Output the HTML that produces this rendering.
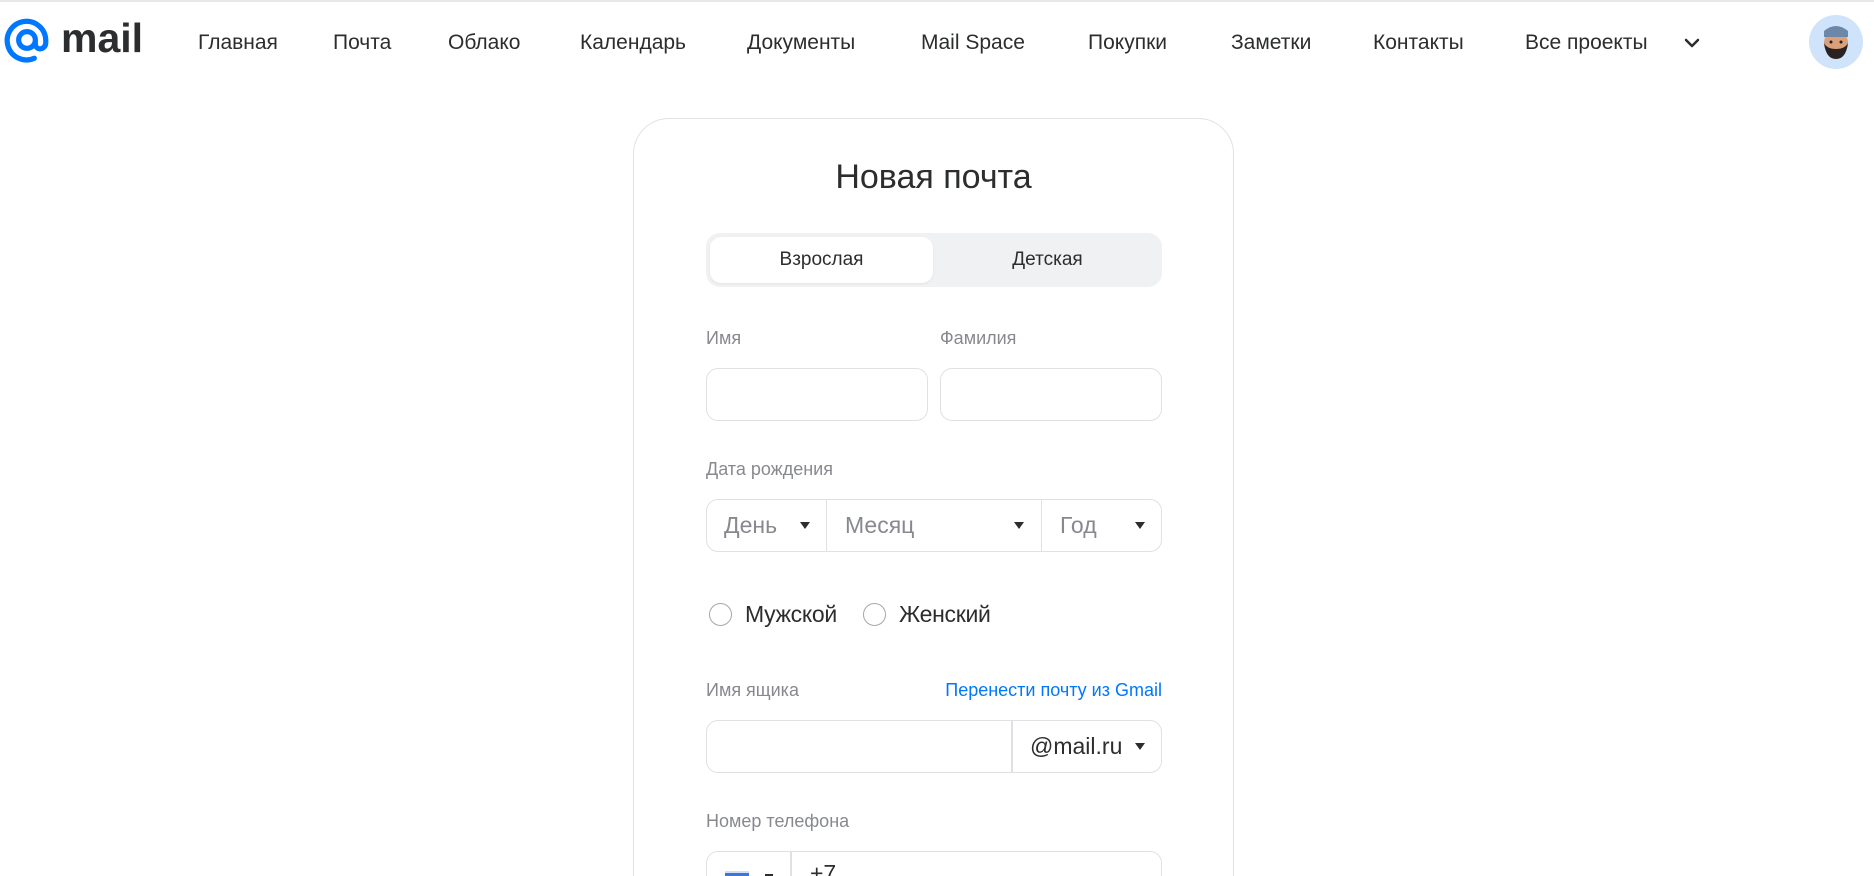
<!DOCTYPE html>
<html style="width:1874px;height:876px;overflow:hidden"><head><meta charset="utf-8"><style>
*{margin:0;padding:0;box-sizing:border-box}
body{width:1874px;height:876px;overflow:hidden;background:#fff;font-family:"Liberation Sans",Arial,sans-serif;color:#2c2d2e;position:relative}
.a{position:absolute;white-space:nowrap}
.nav{font-size:21px;color:#2c2d2e;top:31px}
.lbl{font-size:18px;color:#87898f}
.box{position:absolute;border:1px solid #dfe1e5;border-radius:12px;background:#fff}
.arr{position:absolute;width:0;height:0;border-left:5px solid transparent;border-right:5px solid transparent;border-top:7px solid #2c2d2e}
.ph{font-size:23px;color:#87898f}
.radio{position:absolute;width:23px;height:23px;border:1.5px solid #a5a7ab;border-radius:50%}
</style></head><body>
<div class="a" style="left:0;top:0;width:1874px;height:2px;background:#e7e8ea"></div>
<svg class="a" style="left:3px;top:16px" width="48" height="49" viewBox="0 0 46 47"><path d="M31 23a8 8 0 1 1-8-8 8 8 0 0 1 8 8v3.5c0 3 2 5 4.5 5s5.5-2 5.5-6V23A18.5 18.5 0 1 0 30 40.5" fill="none" stroke="#0077ff" stroke-width="5" stroke-linecap="round"/></svg>
<div class="a" style="left:61px;top:15px;font-size:41px;font-weight:bold;color:#2c2d2e">mail</div>
<div class="a nav" style="left:198px">Главная</div>
<div class="a nav" style="left:333px">Почта</div>
<div class="a nav" style="left:448px">Облако</div>
<div class="a nav" style="left:580px">Календарь</div>
<div class="a nav" style="left:747px">Документы</div>
<div class="a nav" style="left:921px">Mail Space</div>
<div class="a nav" style="left:1088px">Покупки</div>
<div class="a nav" style="left:1231px">Заметки</div>
<div class="a nav" style="left:1373px">Контакты</div>
<div class="a nav" style="left:1525px">Все проекты</div>
<svg class="a" style="left:1684px;top:38px" width="16" height="10" viewBox="0 0 16 10"><path d="M2 2l6 6 6-6" fill="none" stroke="#2c2d2e" stroke-width="2.5" stroke-linecap="round" stroke-linejoin="round"/></svg>
<svg class="a" style="left:1809px;top:15px" width="54" height="54" viewBox="0 0 54 54"><circle cx="27" cy="27" r="27" fill="#cfe3fb"/><ellipse cx="27" cy="28" rx="12" ry="13" fill="#d9a07a"/><path d="M15 16q12-10 24 0v6H15z" fill="#6d87a8"/><path d="M15 28q2 16 12 16t12-16q-3 6-12 6t-12-6z" fill="#2a2220"/><circle cx="22" cy="27" r="1.5" fill="#222"/><circle cx="32" cy="27" r="1.5" fill="#222"/></svg>

<div class="a" style="left:633px;top:118px;width:601px;height:800px;border:1px solid #e0e2e6;border-radius:36px"></div>
<div class="a" style="left:633px;width:601px;top:158px;text-align:center;font-size:34px;color:#2c2d2e">Новая почта</div>
<div class="a" style="left:706px;top:233px;width:456px;height:54px;background:#f0f1f3;border-radius:14px"></div>
<div class="a" style="left:710px;top:237px;width:223px;height:46px;background:#fff;border-radius:11px;box-shadow:0 1px 2px rgba(0,0,0,.06)"></div>
<div class="a" style="left:710px;width:223px;top:249px;text-align:center;font-size:19px">Взрослая</div>
<div class="a" style="left:933px;width:229px;top:249px;text-align:center;font-size:19px">Детская</div>

<div class="a lbl" style="left:706px;top:328px">Имя</div>
<div class="a lbl" style="left:940px;top:328px">Фамилия</div>
<div class="box" style="left:706px;top:368px;width:222px;height:53px"></div>
<div class="box" style="left:940px;top:368px;width:222px;height:53px"></div>

<div class="a lbl" style="left:706px;top:459px">Дата рождения</div>
<div class="box" style="left:706px;top:499px;width:456px;height:53px"></div>
<div class="a" style="left:826px;top:500px;width:1px;height:51px;background:#dfe1e5"></div>
<div class="a" style="left:1041px;top:500px;width:1px;height:51px;background:#dfe1e5"></div>
<div class="a ph" style="left:724px;top:512px">День</div>
<div class="arr" style="left:800px;top:522px"></div>
<div class="a ph" style="left:845px;top:512px">Месяц</div>
<div class="arr" style="left:1014px;top:522px"></div>
<div class="a ph" style="left:1060px;top:512px">Год</div>
<div class="arr" style="left:1135px;top:522px"></div>

<div class="radio" style="left:709px;top:603px"></div>
<div class="a" style="left:745px;top:601px;font-size:23px;letter-spacing:-0.3px">Мужской</div>
<div class="radio" style="left:863px;top:603px"></div>
<div class="a" style="left:899px;top:601px;font-size:23px;letter-spacing:-0.3px">Женский</div>

<div class="a lbl" style="left:706px;top:680px">Имя ящика</div>
<div class="a" style="left:900px;width:262px;text-align:right;top:680px;font-size:18px;color:#0077ff">Перенести почту из Gmail</div>
<div class="box" style="left:706px;top:720px;width:456px;height:53px"></div>
<div class="a" style="left:1011px;top:721px;width:1.5px;height:51px;background:#dfe1e5"></div>
<div class="a" style="left:1030px;top:733px;font-size:23px">@mail.ru</div>
<div class="arr" style="left:1135px;top:743px"></div>

<div class="a lbl" style="left:706px;top:811px">Номер телефона</div>
<div class="box" style="left:706px;top:851px;width:456px;height:60px"></div>
<div class="a" style="left:790px;top:852px;width:1.5px;height:30px;background:#dfe1e5"></div>
<div class="a" style="left:725px;top:871px;width:24px;height:8px;background:#3a78d6;border-top:2px solid #cfe0f6"></div>
<div class="a" style="left:765px;top:874px;width:8px;height:2px;background:#2c2d2e"></div>
<div class="a" style="left:810px;top:860px;font-size:23px">+7</div>
</body></html>
